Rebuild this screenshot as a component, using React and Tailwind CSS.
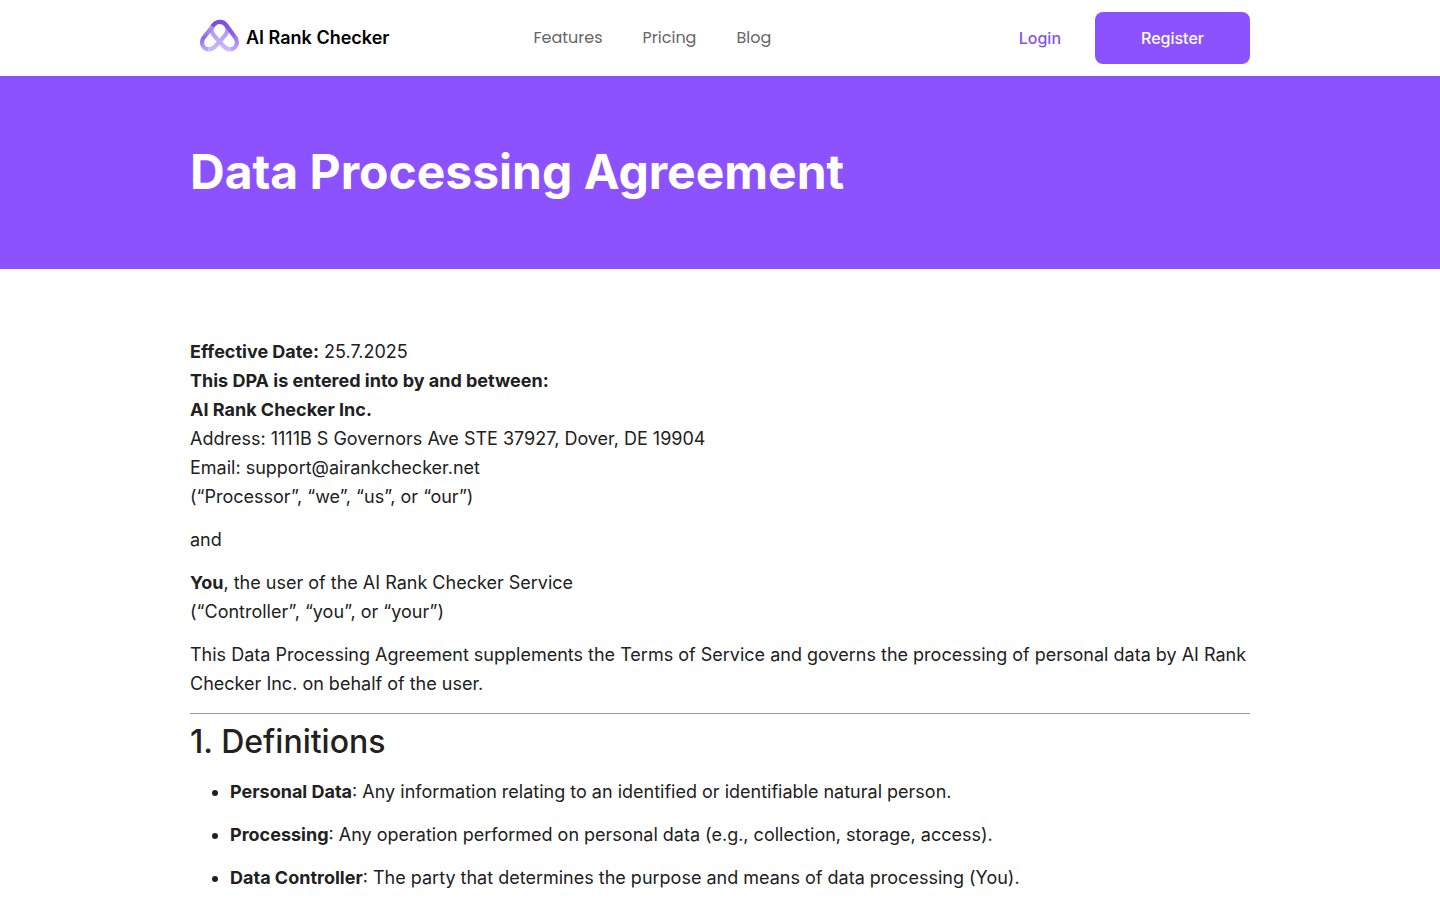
import { clsx } from 'clsx';

const navLinks = [
  { label: 'Features', href: '#features' },
  { label: 'Pricing', href: '#pricing' },
  { label: 'Blog', href: '#blog' },
];

const definitions = [
  { term: 'Personal Data', text: 'Any information relating to an identified or identifiable natural person.' },
  { term: 'Processing', text: 'Any operation performed on personal data (e.g., collection, storage, access).' },
  { term: 'Data Controller', text: 'The party that determines the purpose and means of data processing (You).' },
];

function Logo() {
  return (
    <svg viewBox="0 0 40 38" className="w-10 h-[38px]" fill="none" strokeWidth="4.2" aria-hidden="true">
      <defs>
        <linearGradient id="left" x1="13" y1="6" x2="10" y2="32" gradientUnits="userSpaceOnUse">
          <stop stopColor="#b49df7" />
          <stop offset="0.55" stopColor="#8f66ee" />
          <stop offset="1" stopColor="#bfacf7" />
        </linearGradient>
        <linearGradient id="right" x1="20" y1="2" x2="33" y2="32" gradientUnits="userSpaceOnUse">
          <stop stopColor="#7c4be8" />
          <stop offset="0.5" stopColor="#8a5cec" />
          <stop offset="1" stopColor="#c0adf8" />
        </linearGradient>
        <linearGradient id="inner" x1="20" y1="6" x2="20" y2="30" gradientUnits="userSpaceOnUse">
          <stop stopColor="#a98ef4" />
          <stop offset="1" stopColor="#c9baf9" />
        </linearGradient>
      </defs>
      {/* Inner strands that cross between the lobes */}
      <path d="M12.800 6.500C10.800 9.500 11.500 13 13.500 15.800L19.500 22.800L24.500 28C26 29.500 28 30.300 30.500 30.300" stroke="url(#inner)" />
      <path d="M26.200 6.500C28.200 9.500 27.500 13 25.500 15.800L19.500 22.800L14.500 28C13 29.500 11 30.300 8.500 30.300" stroke="url(#inner)" />
      {/* Outer edges */}
      <path d="M13.500 6.200L3.600 18.700C0.200 24 3 30.300 8.500 30.300" stroke="url(#left)" />
      <path d="M12.500 7.500C16 1.600 23 1.600 26.500 6.500L35.400 18.700C38.800 24 36 30.300 30.500 30.300" stroke="url(#right)" />
    </svg>
  );
}

function Header() {
  return (
    <header className="bg-white">
      <div className="max-w-[1060px] mx-auto py-3 flex items-center">
        <a href="/" className="flex items-center gap-1.5 pl-2.5 text-lg font-semibold text-black">
          <Logo />
          AI Rank Checker
        </a>
        <nav className="flex items-center gap-10 ml-36 mr-auto">
          {navLinks.map((link) => (
            <a key={link.label} href={link.href} className="font-[Poppins,Inter,sans-serif] text-base text-[#666666]">
              {link.label}
            </a>
          ))}
        </nav>
        <div className="flex items-center gap-[34px]">
          <a href="#login" className="text-base font-medium text-[#8553eb]">Login</a>
          <button className="w-[155px] h-[52px] rounded-lg bg-[#8c52ff] text-base font-medium text-white">
            Register
          </button>
        </div>
      </div>
    </header>
  );
}

function Paragraph({ children, className }) {
  return <p className={clsx('mb-[14px]', className)}>{children}</p>;
}

export default function App() {
  return (
    <div className="min-h-screen bg-white font-[Inter,sans-serif] text-[#212121]">
      <Header />

      <section className="bg-[#8c52ff] pt-[66px] pb-[67px]">
        <h1 className="max-w-[1060px] mx-auto text-5xl leading-[60px] font-bold text-white">
          Data Processing Agreement
        </h1>
      </section>

      <main className="max-w-[1060px] mx-auto pt-[68px] text-lg leading-[29px]">
        <Paragraph>
          <strong>Effective Date:</strong> 25.7.2025
          <br />
          <strong>This DPA is entered into by and between:</strong>
          <br />
          <strong>AI Rank Checker Inc.</strong>
          <br />
          Address: 1111B S Governors Ave STE 37927, Dover, DE 19904
          <br />
          Email: support@airankchecker.net
          <br />
          (“Processor”, “we”, “us”, or “our”)
        </Paragraph>
        <Paragraph>and</Paragraph>
        <Paragraph>
          <strong>You</strong>, the user of the AI Rank Checker Service
          <br />
          (“Controller”, “you”, or “your”)
        </Paragraph>
        <Paragraph>
          This Data Processing Agreement supplements the Terms of Service and governs the processing of
          personal data by AI Rank Checker Inc. on behalf of the user.
        </Paragraph>
        <hr className="mt-[15px] border-[#999999]" />

        <h2 className="mt-2 mb-[15px] text-[32px] leading-10 font-medium">1. Definitions</h2>
        <ul className="list-disc pl-10">
          {definitions.map((item) => (
            <li key={item.term} className="mb-[14px]">
              <strong>{item.term}</strong>: {item.text}
            </li>
          ))}
        </ul>
      </main>
    </div>
  );
}
